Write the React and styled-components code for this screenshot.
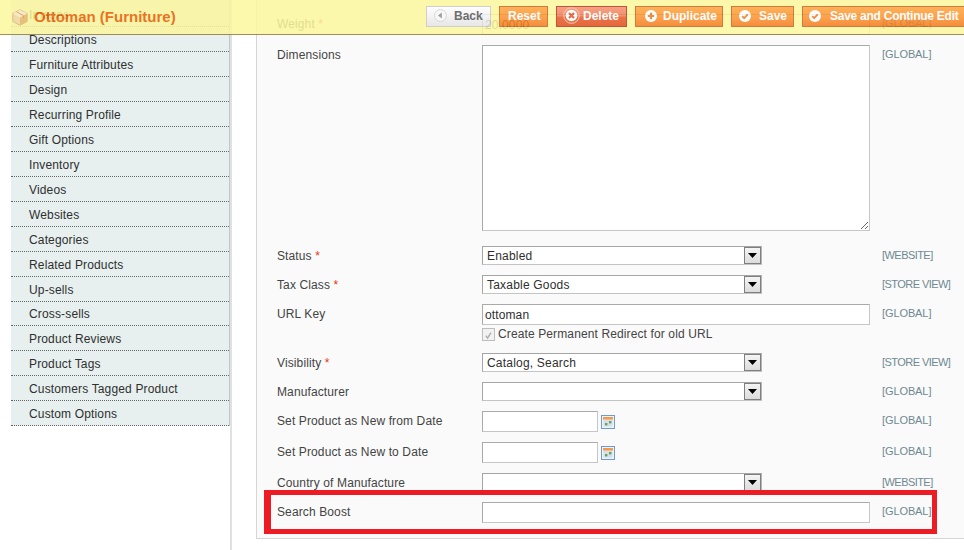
import React from 'react';
import styled, { createGlobalStyle } from 'styled-components';

const GlobalStyle = createGlobalStyle`
  html, body {
    margin: 0;
    padding: 0;
    height: 100%;
    background: #fff;
    overflow: hidden;
  }
  body {
    font: 12px/15px "Liberation Sans", Arial, sans-serif;
    letter-spacing: 0.12px;
    color: #2f2f2f;
  }
`;

const sideItems = [
  'Images', 'Descriptions', 'Furniture Attributes', 'Design', 'Recurring Profile', 'Gift Options',
  'Inventory', 'Videos', 'Websites', 'Categories', 'Related Products', 'Up-sells', 'Cross-sells',
  'Product Reviews', 'Product Tags', 'Customers Tagged Product', 'Custom Options',
];

function BoxLogo() {
  return (
    <svg width="16" height="17" viewBox="0 0 16 17">
      <path d="M8 .7 15.2 4.5v8L8 16.3.8 12.5v-8z" fill="#f3d79a" stroke="#d8b77c" />
      <path d="M8 8.4 15 4.6v7.8L8 16z" fill="#e9b765" />
      <path d="M8 8.4 1 4.6 8 1l7 3.6z" fill="#fbeac2" />
      <path d="M4.5 2.8l7 3.8v2.2" fill="none" stroke="#d39a4b" />
    </svg>
  );
}

function BackIcon() {
  return (
    <svg width="13" height="13" viewBox="0 0 13 13">
      <circle cx="6.5" cy="6.5" r="6" fill="#f7f7f7" stroke="#d0d0d0" />
      <path d="M7.8 3.6v5.8L4 6.5z" fill="#8d8d8d" />
    </svg>
  );
}

function CircleIcon({ kind }) {
  return (
    <svg width="12" height="12" viewBox="0 0 12 12">
      <circle cx="6" cy="6" r="6" fill="#fff" />
      {kind === 'plus' && <path d="M6 2.8v6.4M2.8 6h6.4" stroke="#ed7a22" strokeWidth="2.2" />}
      {kind === 'check' && <path d="M3.2 6.1l2 2 3.5-3.8" fill="none" stroke="#ed7a22" strokeWidth="1.8" />}
    </svg>
  );
}

function DeleteIcon() {
  return (
    <svg width="17" height="17" viewBox="0 0 17 17">
      <circle cx="8.5" cy="8.5" r="7.8" fill="none" stroke="#f9c3ac" />
      <circle cx="8.5" cy="8.5" r="5.8" fill="#fff" />
      <path d="M6 6l5 5M11 6l-5 5" stroke="#e2562c" strokeWidth="2.2" />
    </svg>
  );
}

function CalendarIcon() {
  return (
    <svg width="14" height="14" viewBox="0 0 14 14">
      <rect x=".5" y=".5" width="13" height="13" fill="#eef3fa" stroke="#6d9bd8" />
      <rect x="2" y="2" width="10" height="2.6" fill="#f59a4a" />
      <path d="M2 6h10M2 8h10M2 10h10M4 5v7M6 5v7M8 5v7M10 5v7" stroke="#c3d0de" strokeWidth=".7" />
      <rect x="4" y="8" width="2.4" height="2.4" fill="#62a55b" />
      <rect x="8" y="6" width="2.4" height="2.4" fill="#62a55b" />
    </svg>
  );
}

function CheckMark() {
  return (
    <svg width="13" height="13" viewBox="0 0 13 13">
      <path d="M3.4 6.6l2 3 4-6.4" fill="none" stroke="#aeaeae" strokeWidth="1.7" />
    </svg>
  );
}

function Select({ value }) {
  return (
    <SelectBox>
      <SelectValue>{value}</SelectValue>
      <SelectArrow>
        <svg width="9" height="5" viewBox="0 0 9 5">
          <path d="M0 0h9L4.5 5z" fill="#000" />
        </svg>
      </SelectArrow>
    </SelectBox>
  );
}

function Field({ label, required, scope, children, after }) {
  return (
    <Row $after={after}>
      <Label>
        {label}
        {required && <Required> *</Required>}
      </Label>
      <div>{children}</div>
      <Scope $tight={scope !== '[GLOBAL]'}>{scope}</Scope>
    </Row>
  );
}

export default function App() {
  return (
    <Page>
      <GlobalStyle />
      <Toolbar>
        <TitleWrap>
          <BoxLogo />
          <Title>Ottoman (Furniture)</Title>
        </TitleWrap>
        <Buttons>
          <BackButton $width={65} $pad={7} $gap={7}>
            <BackIcon />
            Back
          </BackButton>
          <Button $width={49} $pad={8}>Reset</Button>
          <Button $danger $width={71} $pad={6} $gap={3}>
            <DeleteIcon />
            Delete
          </Button>
          <Button $width={88} $pad={9} $gap={6}>
            <CircleIcon kind="plus" />
            Duplicate
          </Button>
          <Button $width={63} $pad={7} $gap={8}>
            <CircleIcon kind="check" />
            Save
          </Button>
          <Button $width={170} $pad={6} $gap={9} $tight>
            <CircleIcon kind="check" />
            Save and Continue Edit
          </Button>
        </Buttons>
      </Toolbar>

      <SideColumn>
        <SideList>
          {sideItems.map((item) => (
            <SideItem key={item} $short={item === 'Cross-sells'}>
              {item}
            </SideItem>
          ))}
        </SideList>
      </SideColumn>

      <Panel>
        <Field label="Weight" required scope="[GLOBAL]">
          <TextInput readOnly value="20.0000" />
        </Field>
        <Field label="Dimensions" scope="[GLOBAL]" after={5}>
          <TextArea readOnly value="" />
        </Field>
        <Field label="Status" required scope="[WEBSITE]">
          <Select value="Enabled" />
        </Field>
        <Field label="Tax Class" required scope="[STORE VIEW]">
          <Select value="Taxable Goods" />
        </Field>
        <Field label="URL Key" scope="[GLOBAL]" after={2}>
          <TextInput readOnly value="ottoman" />
          <CheckLine>
            <CheckBox>
              <CheckMark />
            </CheckBox>
            Create Permanent Redirect for old URL
          </CheckLine>
        </Field>
        <Field label="Visibility" required scope="[STORE VIEW]">
          <Select value="Catalog, Search" />
        </Field>
        <Field label="Manufacturer" scope="[GLOBAL]">
          <Select value="" />
        </Field>
        <Field label="Set Product as New from Date" scope="[GLOBAL]">
          <DateLine>
            <TextInput readOnly value="" $small />
            <CalendarIcon />
          </DateLine>
        </Field>
        <Field label="Set Product as New to Date" scope="[GLOBAL]">
          <DateLine>
            <TextInput readOnly value="" $small />
            <CalendarIcon />
          </DateLine>
        </Field>
        <Field label="Country of Manufacture" scope="[WEBSITE]">
          <Select value="" />
        </Field>
        <Field label="Search Boost" scope="[GLOBAL]">
          <TextInput readOnly value="" />
        </Field>
      </Panel>

      <Highlight />
    </Page>
  );
}

const Page = styled.div`
  position: relative;
  display: flex;
  align-items: flex-start;
  width: 964px;
  height: 550px;
  overflow: hidden;
`;

const Toolbar = styled.div`
  position: absolute;
  top: 0;
  left: 0;
  right: 0;
  z-index: 5;
  height: 34px;
  display: flex;
  align-items: center;
  justify-content: space-between;
  background: #fcf79e;
  border-bottom: 1px solid #8f7d3e;
  opacity: 0.85;
`;

const TitleWrap = styled.div`
  display: flex;
  align-items: center;
  gap: 6px;
  padding-left: 12px;
`;

const Title = styled.h3`
  margin: 0;
  font-size: 15px;
  line-height: 18px;
  font-weight: bold;
  letter-spacing: 0;
  color: #eb5e00;
`;

const Buttons = styled.div`
  display: flex;
  flex-shrink: 0;
  gap: 8px;
  margin: 0 -8px 1px 0;
`;

const Button = styled.button`
  box-sizing: border-box;
  display: flex;
  align-items: center;
  gap: ${(props) => props.$gap ?? 7}px;
  width: ${(props) => props.$width}px;
  height: 21px;
  padding: 0 0 0 ${(props) => props.$pad ?? 8}px;
  border: 1px solid ${(props) => (props.$danger ? '#b8391b' : '#c8641e')};
  background: ${(props) =>
    props.$danger
      ? 'linear-gradient(#f6906f, #f08058 45%, #e65a28 55%, #e04e1c)'
      : 'linear-gradient(#ffa53c, #fc9430 50%, #f37a1c)'};
  color: #fff;
  font: bold 12px/15px "Liberation Sans", Arial, sans-serif;
  letter-spacing: ${(props) => (props.$tight ? '-0.25px' : '0')};
  white-space: nowrap;

  svg {
    margin-bottom: 2px;
  }
`;

const BackButton = styled(Button)`
  border-color: #c8c8c8;
  background: linear-gradient(#fff, #e4e4e4);
  color: #555;
`;

const SideColumn = styled.div`
  flex-shrink: 0;
  width: 219px;
  height: 550px;
  margin-left: 11px;
  border-right: 2px solid #e0e2e2;
`;

const SideList = styled.ul`
  list-style: none;
  margin: 0;
  padding: 2px 0 0;
  background: #e7efef;
  border-right: 1px solid #bccaca;
`;

const SideItem = styled.li`
  height: 23px;
  padding: ${(props) => (props.$short ? 0 : 1)}px 0 0 18px;
  line-height: 24px;
  letter-spacing: 0.15px;
  border-bottom: 1px dotted #666;
  color: #2f2f2f;
`;

const Panel = styled.div`
  flex-shrink: 0;
  width: 720px;
  margin-left: 24px;
  padding: 14px 0 15px 20px;
  background: #fafafa;
  border-left: 1px solid #d6d6d6;
  border-bottom: 1px solid #d6d6d6;
`;

const Row = styled.div`
  display: grid;
  grid-template-columns: 193px 388px auto;
  column-gap: 12px;
  margin-bottom: ${(props) => 10 + (props.$after ?? 0)}px;

  &:last-child {
    margin-bottom: 0;
  }
`;

const Label = styled.div`
  padding-top: 3px;
  color: #444;
`;

const Required = styled.span`
  color: #eb340a;
`;

const Scope = styled.div`
  padding-top: 2px;
  font-size: 11px;
  letter-spacing: ${(props) => (props.$tight ? '-0.55px' : '-0.1px')};
  color: #6f8992;
  white-space: nowrap;
`;

const TextInput = styled.input`
  display: block;
  box-sizing: border-box;
  width: ${(props) => (props.$small ? '116px' : '100%')};
  height: 21px;
  padding: 0 2px;
  border: 1px solid;
  border-color: #aaa #c6c6c6 #c6c6c6 #aaa;
  outline: 0;
  background: #fff;
  color: #2f2f2f;
  font: 12px "Liberation Sans", Arial, sans-serif;
  letter-spacing: 0.12px;
`;

const TextArea = styled.textarea`
  display: block;
  box-sizing: border-box;
  width: 100%;
  height: 186px;
  padding: 2px;
  border: 1px solid;
  border-color: #aaa #c6c6c6 #c6c6c6 #aaa;
  outline: 0;
  background: #fff;
`;

const SelectBox = styled.div`
  box-sizing: border-box;
  display: flex;
  align-items: center;
  justify-content: space-between;
  width: 280px;
  height: 19px;
  border: 1px solid;
  border-color: #a5a5a5 #b5b5b5 #c4c4c4 #a5a5a5;
  background: #fff;
`;

const SelectValue = styled.span`
  padding: 1px 0 0 4px;
  letter-spacing: 0.2px;
  color: #2f2f2f;
`;

const SelectArrow = styled.span`
  box-sizing: border-box;
  display: flex;
  align-items: center;
  justify-content: center;
  width: 17px;
  height: 17px;
  border: 1px solid #7f7f7f;
  background: linear-gradient(#f4f4f4, #dcdcdc);
`;

const CheckLine = styled.label`
  display: flex;
  align-items: center;
  gap: 3px;
  height: 13px;
  margin-top: 3px;
  color: #444;
`;

const CheckBox = styled.span`
  box-sizing: border-box;
  display: flex;
  width: 13px;
  height: 13px;
  border: 1px solid #bdbdbd;
  background: #f2f2f2;
`;

const DateLine = styled.div`
  display: flex;
  align-items: center;
  gap: 3px;
`;

const Highlight = styled.div`
  position: absolute;
  left: 264px;
  top: 490px;
  box-sizing: border-box;
  width: 673px;
  height: 44px;
  border: 5px solid #ed1c24;
  border-left-width: 7px;
  pointer-events: none;
`;
